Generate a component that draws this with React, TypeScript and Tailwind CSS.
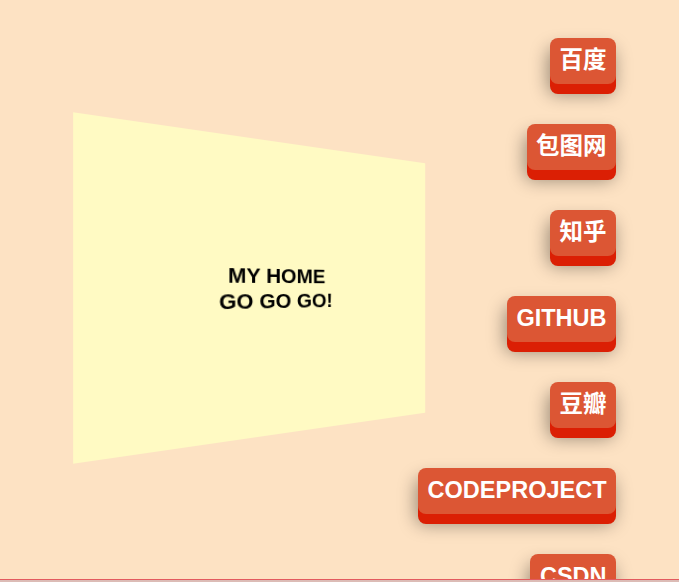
const links = ["百度", "包图网", "知乎", "GITHUB", "豆瓣", "CODEPROJECT", "CSDN"];

const App = () => {
  return (
    <div className="h-screen w-full overflow-hidden bg-[#fde2c3] flex font-['Liberation_Sans','Noto_Sans_CJK_SC',sans-serif]">
      {/* 3D panel */}
      <div className="flex-1 min-w-0 pl-[103px] pt-[142px]">
        <div className="w-[352px] h-[292px] shrink-0 bg-[#fffac3] flex items-center justify-center [transform:perspective(246px)_rotateY(13.7deg)]">
          <div className="text-[21px] leading-[25px] font-bold text-black text-center">
            MY HOME
            <br />
            GO GO GO!
          </div>
        </div>
      </div>

      {/* Link buttons */}
      <div className="flex flex-col items-end gap-[40px] pt-[38px] pr-[63px]">
        {links.map((name) => (
          <a
            key={name}
            className="shrink-0 h-[46px] px-[9.5px] flex items-center rounded-[8px] bg-[#dc5634] text-white text-[23.5px] font-bold whitespace-nowrap shadow-[0_10px_0_#db1f04,-2px_10px_18px_rgba(0,0,0,0.4)]"
          >
            {name}
          </a>
        ))}
      </div>

      {/* bottom bar */}
      <div className="fixed bottom-0 left-0 right-0 flex flex-col">
        <div className="h-px bg-[#e35a5e]" />
        <div className="h-[2px] bg-[#dcbcb6]" />
      </div>
    </div>
  );
};

export default App;
